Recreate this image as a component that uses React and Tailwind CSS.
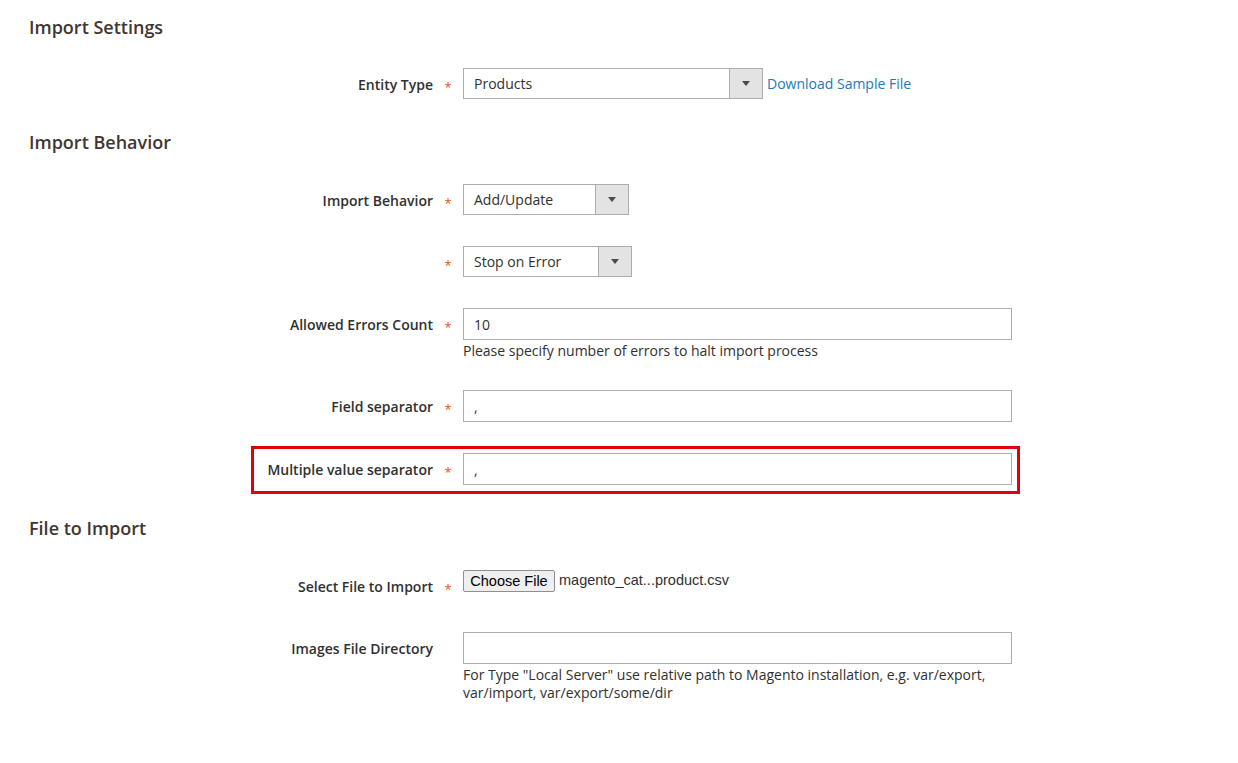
import React from "react";

const font = { fontFamily: '"Open Sans", "Noto Sans", sans-serif' };

function Caret() {
  return (
    <svg width="8" height="5" viewBox="0 0 8 5" className="block">
      <path d="M0 0 H8 L4 5 Z" fill="#514943" />
    </svg>
  );
}

function Label({ text, required }) {
  return (
    <>
      <div className="w-[433px] shrink-0 pt-[7px] text-right text-[14px] leading-[19px] font-semibold text-[#303030]">
        {text}
      </div>
      <div className="w-[30px] shrink-0 pt-[10px] text-center text-[13px] leading-[19px] text-[#eb5202]">
        {required ? "*" : ""}
      </div>
    </>
  );
}

function Select({ value, width, arrowW = 33 }) {
  return (
    <div
      className="flex h-[31px] border border-[#adadad] bg-white"
      style={{ width }}
    >
      <div className="flex-1 pl-[10px] text-[14px] leading-[29px] text-[#303030]">{value}</div>
      <div
        className="flex items-center justify-center border-l border-[#adadad] bg-[#e3e3e3]"
        style={{ width: arrowW }}
      >
        <Caret />
      </div>
    </div>
  );
}

function TextInput({ value }) {
  return (
    <div className="h-[32px] w-[549px] border border-[#adadad] bg-white pl-[10px] pt-[1px] text-[14px] leading-[30px] text-[#303030]">
      {value}
    </div>
  );
}

function Note({ children }) {
  return <div className="mt-[2px] w-[549px] text-[14px] leading-[18px] text-[#303030]">{children}</div>;
}

function Heading({ children, className = "" }) {
  return (
    <div className={"pl-[29px] text-[18px] leading-[24px] font-semibold text-[#41362f] " + className}>
      {children}
    </div>
  );
}

export default function App() {
  return (
    <div className="h-[763px] w-[1238px] overflow-hidden bg-white pt-[15px]" style={font}>
      <Heading>Import Settings</Heading>

      <div className="mt-[29px] flex">
        <Label text="Entity Type" required />
        <Select value="Products" width={300} />
        <a className="ml-[4px] pt-[6px] text-[14px] leading-[19px] text-[#1979c3]">Download Sample File</a>
      </div>

      <Heading className="mt-[31px]">Import Behavior</Heading>

      <div className="mt-[30px] flex">
        <Label text="Import Behavior" required />
        <Select value="Add/Update" width={166} />
      </div>

      <div className="mt-[31px] flex">
        <Label text="" required />
        <Select value="Stop on Error" width={169} />
      </div>

      <div className="mt-[31px] flex">
        <Label text="Allowed Errors Count" required />
        <div>
          <TextInput value="10" />
          <Note>Please specify number of errors to halt import process</Note>
        </div>
      </div>

      <div className="mt-[30px] flex">
        <Label text="Field separator" required />
        <TextInput value="," />
      </div>

      <div className="relative mt-[31px] flex">
        <Label text="Multiple value separator" required />
        <TextInput value="," />
        <div className="pointer-events-none absolute left-[251px] top-[-7px] h-[48px] w-[769px] border-[3px] border-[#e3000b]" />
      </div>

      <Heading className="mt-[31px]">File to Import</Heading>

      <div className="mt-[30px] flex h-[32px]">
        <Label text="Select File to Import" required />
        <div className="flex items-start">
          <div
            className="h-[22px] w-[92px] rounded-[2px] border border-[#8f8f8f] bg-[#efefef] text-center text-[14.5px] leading-[20px] text-black"
            style={{ fontFamily: '"Liberation Sans", Arial, sans-serif' }}
          >
            Choose File
          </div>
          <div
            className="ml-[4px] text-[14.5px] leading-[20px] text-[#303030]"
            style={{ fontFamily: '"Liberation Sans", Arial, sans-serif' }}
          >
            magento_cat...product.csv
          </div>
        </div>
      </div>

      <div className="mt-[30px] flex">
        <Label text="Images File Directory" />
        <div>
          <TextInput value="" />
          <Note>
            For Type "Local Server" use relative path to Magento installation, e.g. var/export,
            var/import, var/export/some/dir
          </Note>
        </div>
      </div>
    </div>
  );
}
